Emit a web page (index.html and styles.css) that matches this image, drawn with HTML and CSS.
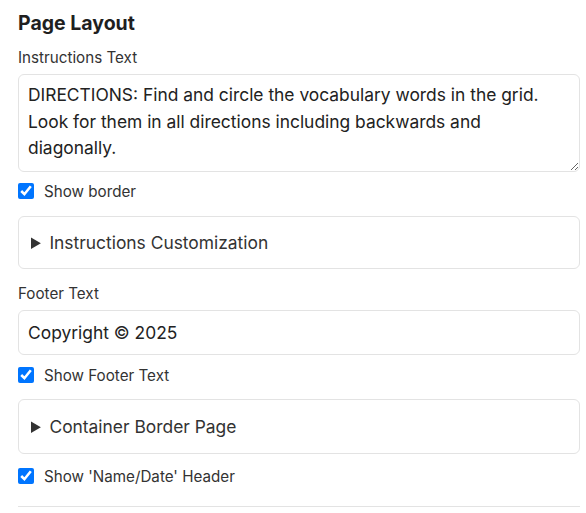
FILE: index.html
```html
<!DOCTYPE html>
<html>
<head>
<meta charset="utf-8">
<link rel="stylesheet" href="styles.css">
</head>
<body>
<section class="panel">
  <h2 class="title">Page Layout</h2>
  <div class="field field-first">
    <label class="label" for="instr">Instructions Text</label>
    <textarea id="instr" class="textarea">DIRECTIONS: Find and circle the vocabulary words in the grid. Look for them in all directions including backwards and diagonally.</textarea>
  </div>
  <label class="check check-border"><input type="checkbox" checked><span>Show border</span></label>
  <details class="box box-instr"><summary>Instructions Customization</summary></details>
  <div class="field field-footer">
    <label class="label" for="footer">Footer Text</label>
    <input id="footer" class="input" type="text" value="Copyright © 2025">
  </div>
  <label class="check check-footer"><input type="checkbox" checked><span>Show Footer Text</span></label>
  <details class="box box-container"><summary>Container Border Page</summary></details>
  <label class="check check-header"><input type="checkbox" checked><span>Show 'Name/Date' Header</span></label>
  <hr class="rule">
</section>
</body>
</html>
```

FILE: styles.css
```css
* { box-sizing: border-box; }
html, body { margin: 0; background: #fff; }
body {
  font-family: Inter, "Noto Sans", sans-serif;
  color: #222;
}
.panel {
  width: 562px;
  margin-left: 18px;
  padding-top: 10px;
  display: flex;
  flex-direction: column;
}
.title {
  margin: 0;
  font-size: 19.5px;
  font-weight: 700;
  line-height: 26px;
  color: #1f1f1f;
}
.field { display: flex; flex-direction: column; }
.label {
  font-size: 15.2px;
  line-height: 20px;
  color: #333;
  margin-bottom: 6px;
}
.field-first .label { margin-top: 12px; }
.field-footer .label { margin-top: 15px; }
.textarea {
  font-family: inherit;
  font-size: 17.4px;
  line-height: 26.6px;
  color: #222;
  border: 1px solid #e3e3e3;
  border-radius: 6px;
  padding: 7px 9px 6px;
  height: 98px;
  width: 100%;
  resize: vertical;
  outline: none;
}
.check {
  display: flex;
  align-items: center;
  gap: 10px;
  font-size: 15.2px;
  color: #333;
  height: 16px;
}
.check-border { margin-top: 11px; }
.check-footer { margin-top: 12px; }
.check-header { margin-top: 14px; }
.check input {
  margin: 0;
  width: 16px;
  height: 16px;
  accent-color: #0075ff;
}
.box {
  border: 1px solid #e3e3e3;
  border-radius: 6px;
  padding: 0 12px;
}
.box-instr { margin-top: 17px; height: 53px; }
.box-container { margin-top: 16px; height: 55px; }
.box summary {
  font-size: 17.4px;
  line-height: 51px;
  color: #333;
  cursor: pointer;
}
.box-container summary { line-height: 53px; }
.input {
  font-family: inherit;
  font-size: 17.4px;
  color: #222;
  border: 1px solid #e3e3e3;
  border-radius: 6px;
  height: 45px;
  padding: 0 9px;
  width: 100%;
  outline: none;
}
.rule {
  margin: 22px 0 0;
  border: 0;
  border-top: 1px solid #e3e3e3;
  width: 562px;
}
```
